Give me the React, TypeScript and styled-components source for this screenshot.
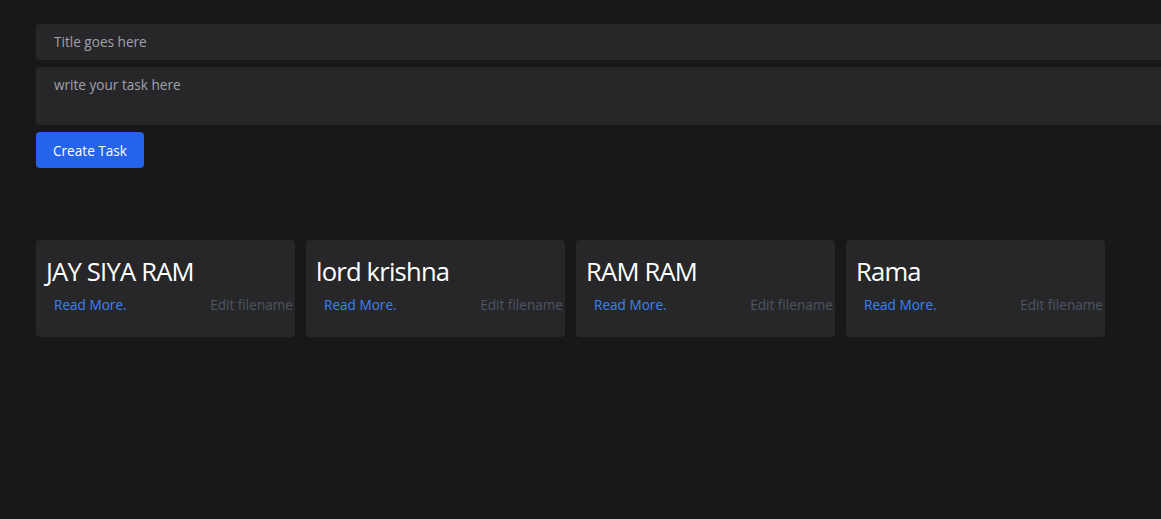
import React from "react";
import styled, { createGlobalStyle } from "styled-components";

const Global = createGlobalStyle`
  html, body { margin: 0; padding: 0; background: #18181b; }
  body { font-family: "Open Sans", "Noto Sans", sans-serif; overflow: hidden; }
  * { box-sizing: border-box; }
`;

const Page = styled.div`
  min-height: 519px;
  background: #18181b;
  padding: 24px 0 0 36px;
`;

const Form = styled.div`
  display: flex;
  flex-direction: column;
  gap: 7px;
  width: 100%;
`;

const TitleInput = styled.div`
  height: 36px;
  background: #27272a;
  border-radius: 4px 0 0 4px;
  color: #a1a1aa;
  font-size: 13.6px;
  padding: 8px 18px;
`;

const TaskArea = styled.div`
  height: 58px;
  background: #27272a;
  border-radius: 4px 0 0 4px;
  color: #a1a1aa;
  font-size: 13.6px;
  padding: 8px 18px;
`;

const Button = styled.button`
  width: 108px;
  height: 36px;
  background: #2563eb;
  color: #ffffff;
  border: none;
  border-radius: 4px;
  font-family: inherit;
  font-size: 13.6px;
  padding: 0;
`;

const Grid = styled.div`
  display: flex;
  gap: 11px;
  margin-top: 72px;
`;

const Card = styled.div`
  width: 259px;
  height: 97px;
  background: #27272a;
  border-radius: 4px;
  padding: 15px 0 0 10px;
  display: flex;
  flex-direction: column;
`;

const CardTitle = styled.h2`
  margin: 0;
  color: #ffffff;
  font-size: 25.6px;
  font-weight: 400;
  letter-spacing: -0.8px;
  line-height: 34px;
`;

const Actions = styled.div`
  display: flex;
  justify-content: space-between;
  align-items: center;
  padding: 0 2px 0 8px;
  margin-top: 6px;
  font-size: 13.6px;
`;

const ReadMore = styled.span`
  color: #3b82f6;
`;

const Edit = styled.span`
  color: #4b5563;
`;

const tasks = ["JAY SIYA RAM", "lord krishna", "RAM RAM", "Rama"];

export default function App() {
  return (
    <Page>
      <Global />
      <Form>
        <TitleInput>Title goes here</TitleInput>
        <TaskArea>write your task here</TaskArea>
        <div>
          <Button>Create Task</Button>
        </div>
      </Form>
      <Grid>
        {tasks.map((t) => (
          <Card key={t}>
            <CardTitle>{t}</CardTitle>
            <Actions>
              <ReadMore>Read More.</ReadMore>
              <Edit>Edit filename</Edit>
            </Actions>
          </Card>
        ))}
      </Grid>
    </Page>
  );
}
